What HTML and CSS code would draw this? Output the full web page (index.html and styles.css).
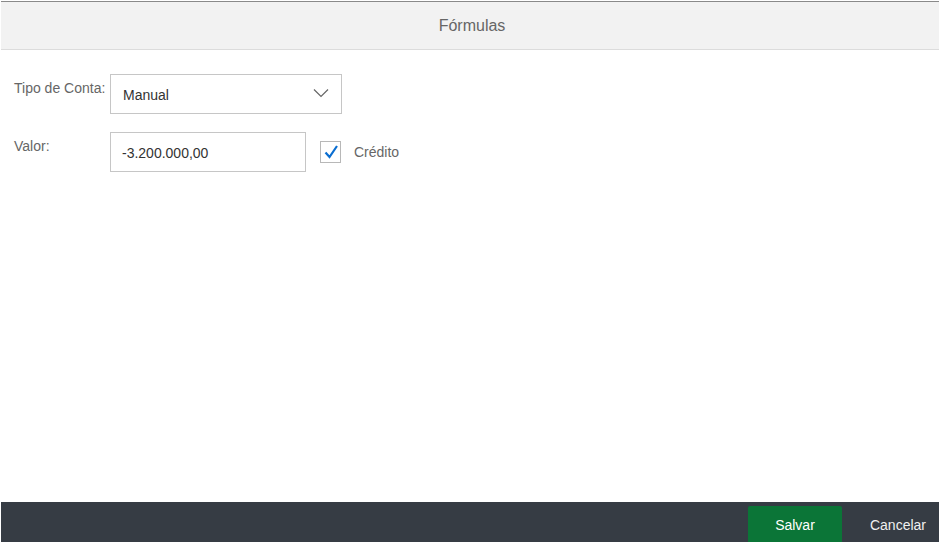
FILE: index.html
```html
<!DOCTYPE html>
<html lang="pt">
<head>
<meta charset="utf-8">
<title>Fórmulas</title>
<link rel="stylesheet" href="styles.css">
</head>
<body>
<div class="dialog">
  <header class="dlg-header">Fórmulas</header>
  <main class="dlg-content">
    <div class="form-row">
      <label class="form-label">Tipo de Conta:</label>
      <div class="select">
        <span class="select-value">Manual</span>
        <svg class="select-arrow" width="16" height="10" viewBox="0 0 16 10"><path d="M1 1.5 L8 8.5 L15 1.5" fill="none" stroke="#666" stroke-width="1.2"/></svg>
      </div>
    </div>
    <div class="form-row">
      <label class="form-label">Valor:</label>
      <div class="input">-3.200.000,00</div>
      <div class="checkbox-wrap">
        <span class="checkbox">
          <svg width="16" height="16" viewBox="0 0 16 16"><path d="M2.5 8.5 L6.5 13 L14 2" fill="none" stroke="#0a6ed1" stroke-width="2.2"/></svg>
        </span>
        <span class="checkbox-label">Crédito</span>
      </div>
    </div>
  </main>
  <footer class="dlg-footer">
    <button class="btn btn-accept">Salvar</button>
    <button class="btn btn-plain">Cancelar</button>
  </footer>
</div>
</body>
</html>
```

FILE: styles.css
```css
html, body {
  margin: 0;
  padding: 0;
  background: #fff;
}
body {
  font-family: "Liberation Sans", Arial, sans-serif;
}
.dialog {
  width: 938px;
  height: 541px;
  margin: 1px 0 0 1px;
  display: flex;
  flex-direction: column;
  border-top: 1px solid #8a8a8a;
  box-sizing: border-box;
}
.dlg-header {
  height: 47px;
  flex: none;
  background: #f2f2f2;
  border-bottom: 1px solid #dcdcdc;
  color: #666;
  font-size: 16px;
  display: flex;
  align-items: center;
  justify-content: center;
  padding-left: 4px;
}
.dlg-content {
  flex: 1;
  padding: 24px 0 0 13px;
  display: flex;
  flex-direction: column;
  gap: 18px;
}
.form-row {
  display: flex;
  align-items: flex-start;
}
.form-label {
  width: 96px;
  flex: none;
  color: #666;
  font-size: 14px;
  padding-top: 6px;
}
.select {
  width: 232px;
  height: 40px;
  box-sizing: border-box;
  border: 1px solid #c6c6c6;
  display: flex;
  align-items: center;
  justify-content: space-between;
  padding: 2px 12px 0 12px;
}
.select-value, .input {
  font-size: 14px;
  color: #333;
}
.select-arrow {
  margin-top: -4px;
}
.input {
  width: 196px;
  height: 40px;
  box-sizing: border-box;
  border: 1px solid #c6c6c6;
  display: flex;
  align-items: center;
  padding: 1px 0 0 11px;
}
.checkbox-wrap {
  display: flex;
  align-items: center;
  margin-left: 14px;
  margin-top: 9px;
}
.checkbox {
  width: 21px;
  height: 22px;
  box-sizing: border-box;
  border: 1px solid #b8b8b8;
  display: flex;
  align-items: center;
  justify-content: center;
  background: #fff;
}
.checkbox-label {
  color: #666;
  font-size: 14px;
  margin-left: 13px;
}
.dlg-footer {
  height: 40px;
  flex: none;
  background: #363c44;
  display: flex;
  justify-content: flex-end;
  align-items: flex-end;
  padding-right: 13px;
}
.btn {
  font-family: "Liberation Sans", Arial, sans-serif;
  font-size: 14px;
  border: none;
  background: none;
  color: #f0f0f0;
  height: 36px;
  padding: 0;
  cursor: pointer;
}
.btn-accept {
  width: 94px;
  background: #0b7537;
  color: #fff;
  border-radius: 2px 2px 0 0;
  padding-top: 2px;
}
.btn-plain {
  margin-left: 28px;
  padding-top: 2px;
}
```
